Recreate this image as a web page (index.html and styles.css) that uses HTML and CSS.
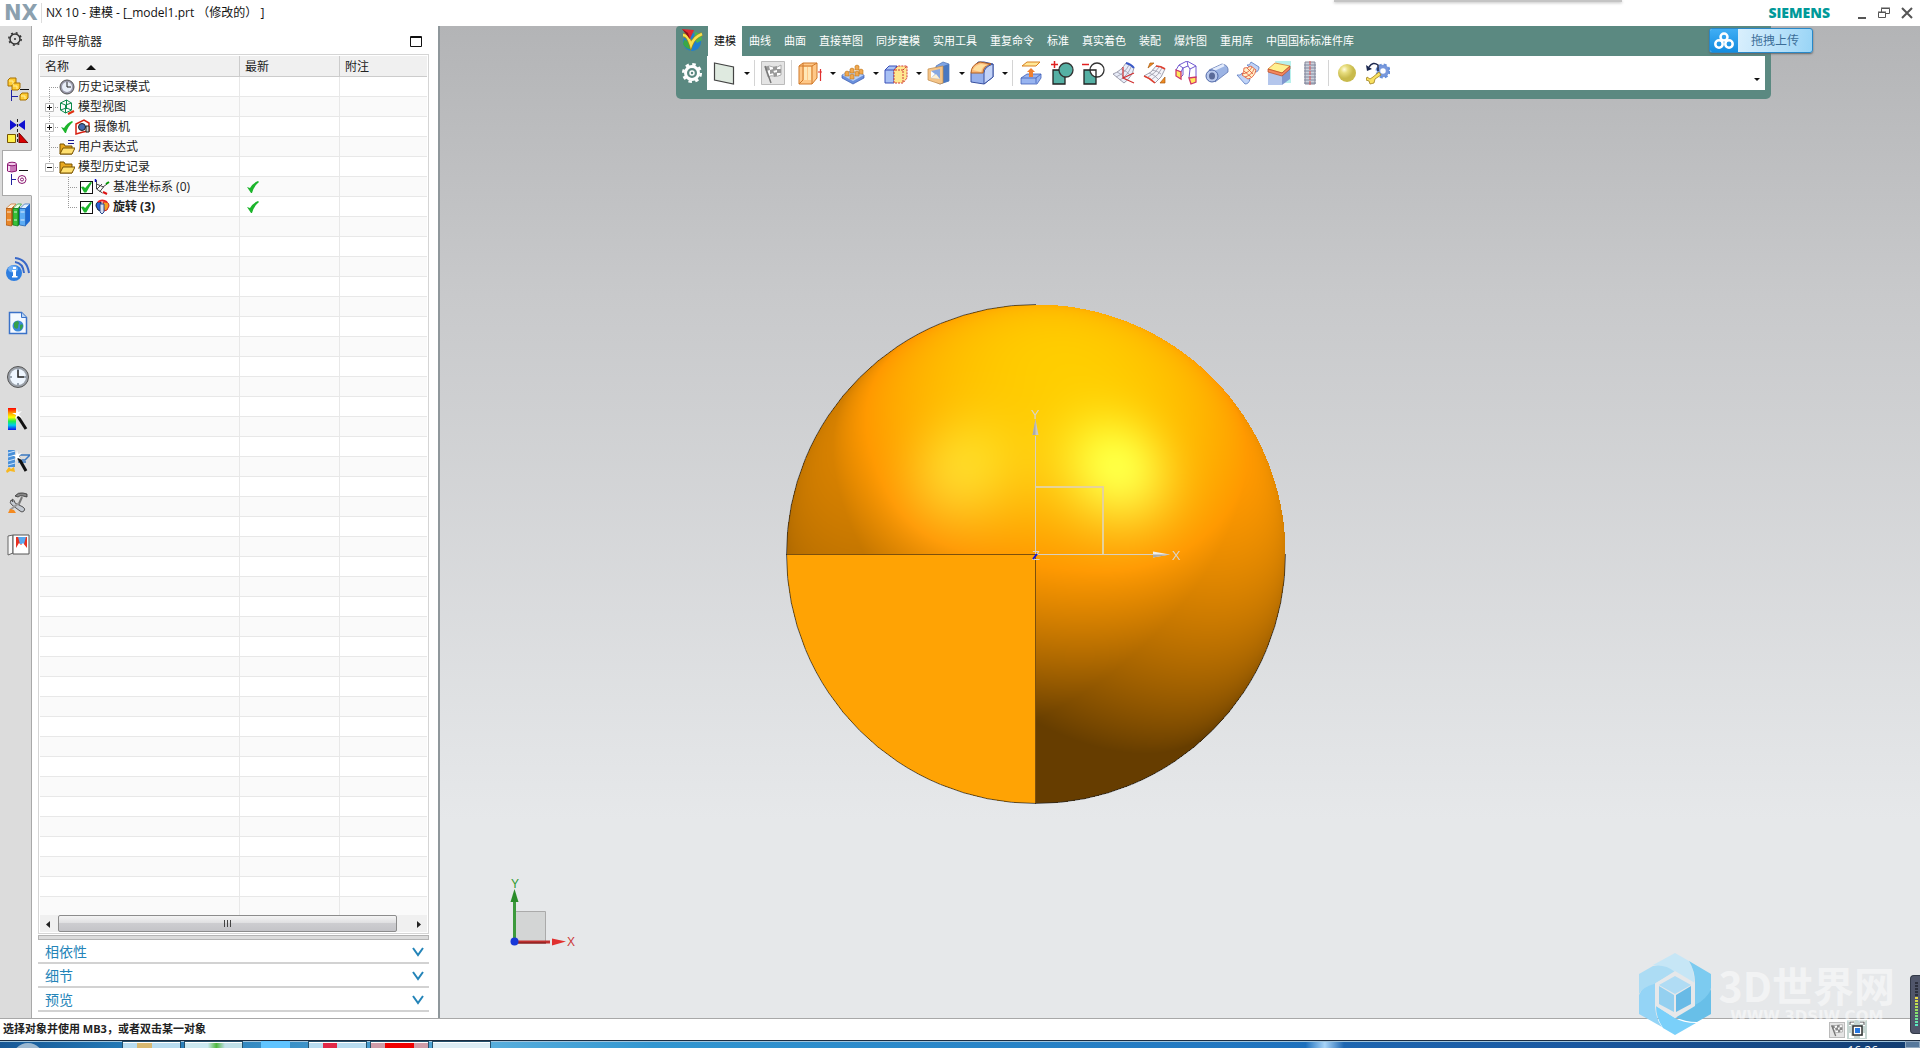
FILE: index.html
```html
<!DOCTYPE html>
<html lang="zh-CN">
<head>
  <meta charset="utf-8">
  <title>NX 10 - 建模</title>
  <link rel="stylesheet" href="styles.css">
</head>
<body>
  <header class="titlebar">
    <span class="nx-logo">NX</span>
    <h1 class="title">NX 10 - 建模 - [_model1.prt （修改的） ]</h1>
    <div class="top-shadow"></div>
    <span class="siemens">SIEMENS</span>
    <div class="window-buttons">
      <button aria-label="最小化"><svg width="12" height="14" viewBox="0 0 12 14"><path d="M2 11h8v2H2z" fill="#555"/></svg></button>
      <button aria-label="还原"><svg width="14" height="14" viewBox="0 0 14 14" fill="none" stroke="#555"><path d="M4.500 6V2.500h8v5H9M4 2h9"/><path d="M1.500 6.500h7v5h-7zM1 6h8"/></svg></button>
      <button aria-label="关闭"><svg width="14" height="14" viewBox="0 0 14 14" stroke="#555" stroke-width="2"><path d="M2 2l10 10M12 2L2 12"/></svg></button>
    </div>
  </header>

  <main class="main">
    <nav class="sidebar">
      <button class="side-gear" aria-label="设置"><svg width="16" height="16" viewBox="0 0 16 16" fill="none" stroke="#333"><circle cx="8" cy="8" r="5" stroke-width="1.500"/><circle cx="8" cy="8" r="6.200" stroke-width="1.500" stroke-dasharray="2 2.870"/><circle cx="8" cy="8" r="1" fill="#333" stroke="none"/></svg></button>
      <button class="side-item" aria-label="装配导航器"><svg width="24" height="24" viewBox="0 0 24 24"><g fill="#fc3" stroke="#a87000"><path d="M2 3l2-2h6v6l-2 2H2z"/><path d="M6 8l2-2h6v5l-2 2H6zM14 18l2-2h6v5l-2 2h-6z"/></g><path d="M3 4h4v4M7 9h4v3M15 19h4v3" fill="none" stroke="#fff2a0"/><path d="M5.500 13v11M5 19.500h7" stroke="#2222a0"/><path d="M14 12.500h9" stroke="#111"/></svg></button>
      <button class="side-item" aria-label="约束导航器"><svg width="24" height="24" viewBox="0 0 24 24"><path d="M4 1l7 5-7 5zM19 1l-7 5 7 5z" fill="#1010d0"/><path d="M1.500 15.500h8v8h-8z" fill="#fff04a" stroke="#775500"/><path d="M13 14l9 10h-9z" fill="#d80000" stroke="#600"/><path d="M11.500 0v24" stroke="#222" stroke-dasharray="3 2"/></svg></button>
      <button class="side-item active" aria-label="部件导航器"><svg width="24" height="24" viewBox="0 0 24 24"><path d="M1.500 3v7q4 2 9 0V3" fill="#c878b8" stroke="#8a1870"/><ellipse cx="6" cy="3" rx="4.500" ry="1.800" fill="#f2c8ea" stroke="#8a1870"/><path d="M3 5v5" stroke="#f5d8f0" stroke-width="2"/><path d="M5.500 13v11M5 18.500h5" stroke="#2222a0"/><path d="M13 9.500h9" stroke="#111"/><g fill="none" stroke="#8a1870"><circle cx="16" cy="18.500" r="4"/><circle cx="16" cy="18.500" r="1.500"/></g></svg></button>
      <button class="side-item" aria-label="重用库"><svg width="24" height="24" viewBox="0 0 24 24"><path d="M0 5.500L5 1h5L5.500 5.500z" fill="#fff0dc" stroke="#c87020" stroke-width=".7"/><path d="M0 5.500h5.500V23L0 22z" fill="#e8872a" stroke="#a85010" stroke-width=".7"/><path d="M5.500 5.500L8 3v18l-2.500 2z" fill="#b85a10"/><path d="M7 5.500L11.500 1h4L12 5.500z" fill="#e8ffe4" stroke="#1c9a2c" stroke-width=".7"/><path d="M7 5.500h5V23l-5-1z" fill="#38c038" stroke="#0c7a1c" stroke-width=".7"/><path d="M12 5.500L14 3v18l-2 2z" fill="#128020"/><path d="M14 5.500L18.500 1H24l-4.500 4.500z" fill="#e0f0ff" stroke="#2868c0" stroke-width=".7"/><path d="M13.500 5.500h6V23l-6-1z" fill="#5cacf4" stroke="#1558a8" stroke-width=".7"/><path d="M19.500 5.500L24 1v17l-4.500 5z" fill="#1c68d0"/><path d="M1 9h4M1 17h4M8 9h3M8 17h3M14.500 9h4M14.500 17h4" stroke="#fff" opacity=".8"/></svg></button>
      <button class="side-item gap" aria-label="资讯"><svg width="24" height="24" viewBox="0 0 24 24"><circle cx="8" cy="16" r="8" fill="#2e7ee0"/><ellipse cx="7" cy="12" rx="5" ry="3.500" fill="#8cc4ff" opacity=".7"/><path d="M7 10h3v2H7zM6 13h4v6h1.500v1.500H6V19h1v-4.500H6z" fill="#fff"/><g fill="none" stroke="#3868c8" stroke-width="2"><path d="M9 5q8 1 9 11"/><path d="M9 1q12 1 14 15"/></g></svg></button>
      <button class="side-item gap" aria-label="浏览器"><svg width="24" height="24" viewBox="0 0 24 24"><path d="M3.500 1.500h12l5 5v16h-17z" fill="#f4f9ff" stroke="#3a72c8" stroke-width="1.500"/><path d="M15.500 1.500v5h5" fill="#bcd6f4" stroke="#3a72c8"/><circle cx="12" cy="15" r="5.500" fill="#3c88d8"/><path d="M8 12q4-4 5 0-1 2-1 5-2 2-4-1zM14 14q3-2 3 1-1 3-3 4z" fill="#34a04a"/></svg></button>
      <button class="side-item gap" aria-label="历史记录"><svg width="24" height="24" viewBox="0 0 24 24"><circle cx="12" cy="12" r="10.500" fill="#9aa0a8" stroke="#555"/><circle cx="12" cy="12" r="8" fill="#eef6ff"/><path d="M12 5v7h6" fill="none" stroke="#222" stroke-width="1.500"/><path d="M12 4v2M12 18v2M4 12h2M18 12h2" stroke="#456"/></svg></button>
      <button class="side-item" aria-label="系统材料"><svg width="24" height="24" viewBox="0 0 24 24"><defs><linearGradient id="rainbow" x2="0" y2="1"><stop stop-color="#f00"/><stop offset=".25" stop-color="#fa0"/><stop offset=".42" stop-color="#ff0"/><stop offset=".6" stop-color="#2e4"/><stop offset=".78" stop-color="#0ce"/><stop offset="1" stop-color="#11e"/></linearGradient></defs><path d="M2 1h8v22H2z" fill="url(#rainbow)"/><path d="M11 8l9 14" stroke="#111" stroke-width="3"/><path d="M11 1l1 4 4-1-3 3 3 4-4-2-3 3 1-4-4-2h4z" fill="#fff"/></svg></button>
      <button class="side-item" aria-label="加工向导"><svg width="24" height="24" viewBox="0 0 24 24"><path d="M2 1h7v17H2z" fill="#4a90d8"/><path d="M2 4l7-2M2 8l7-2M2 12l7-2M2 16l7-2" stroke="#cfe6ff"/><path d="M12 6h12l-5 5h-6M12 13h8" fill="none" stroke="#3a78c0" stroke-width="1.500"/><path d="M0 22l3-4 2 2 3-2 1 5-5-1-3 2z" fill="#f8b820"/><path d="M11 6l9 16" stroke="#111" stroke-width="3"/><path d="M11 1l1 4 4-1-3 3 3 4-4-2-3 3 1-4-4-2h4z" fill="#fff"/></svg></button>
      <button class="side-item" aria-label="工具"><svg width="24" height="24" viewBox="0 0 24 24"><path d="M9 5q3-4 8-3l4 1v3l-4-1q-3-1-5 1z" fill="#888" stroke="#333" stroke-width=".8"/><path d="M16 6l-4 9" stroke="#777" stroke-width="2"/><path d="M5 9q-2 3 1 5l8 6q2 2 4 0t-1-4l-8-4q0-3-3-4l1 3z" fill="#c4cad2" stroke="#555"/><path d="M4 19l9-7" stroke="#999" stroke-width="2"/><path d="M2 22l2-4 4 1 2 3z" fill="#f48a20"/></svg></button>
      <button class="side-item" aria-label="角色"><svg width="24" height="24" viewBox="0 0 24 24"><path d="M2 3l5-1v18l-5 2z" fill="#f8f8f8" stroke="#666"/><path d="M7 2h16v19H7z" fill="#fff" stroke="#555"/><path d="M10 4h11v11H10z" fill="#e83020"/><path d="M12 4h8l-2 7h-4z" fill="#58a8f0"/><path d="M10 15l3-5 2 2 2-2 4 5z" fill="#fff"/></svg></button>
    </nav>

    <section class="navigator">
      <div class="nav-head">
        <h2 class="nav-title">部件导航器</h2>
        <button aria-label="最大化"><svg width="12" height="12" viewBox="0 0 12 12"><path d="M.5.5h11v10H.5zM0 1.500h12" fill="none" stroke="#111"/></svg></button>
      </div>
      <div class="tree-frame">
        <div class="tree-grid">
          <table class="tree">
            <thead>
              <tr><th class="col-name">名称 <span class="sort"></span></th><th class="col-new">最新</th><th>附注</th></tr>
            </thead>
            <tbody>
              <tr><td><div class="node"><svg class="twig" viewBox="0 0 19 20"><path d="M9.500 10v10M9 10.500h10"/></svg><svg class="ico" viewBox="0 0 16 16"><circle cx="8" cy="8" r="7" fill="#99a" stroke="#555"/><circle cx="8" cy="8" r="5" fill="#e8eef8"/><path d="M8 3v5h4" fill="none" stroke="#222"/></svg><span>历史记录模式</span></div></td><td></td><td></td></tr>
              <tr><td><div class="node"><svg class="twig" viewBox="0 0 19 20"><path d="M9.500 0v20M9 10.500h10"/><path class="box" d="M5.500 6.500h8v8h-8z"/><path class="sign" d="M7 10.500h5M9.500 8v5"/></svg><svg class="ico" viewBox="0 0 16 16"><path d="M1.500 4l6-3 5 3v7l-6 3-5-3zM1.500 4l5 2 6-2M6.500 6v8M7.500 1v9M1.500 11l6-2 5 2" fill="none" stroke="#0a8a4a"/><path d="M9 15l6-3" stroke="#e03010" stroke-width="2"/></svg><span>模型视图</span></div></td><td></td><td></td></tr>
              <tr><td><div class="node"><svg class="twig" viewBox="0 0 19 20"><path d="M9.500 0v20M9 10.500h10"/><path class="box" d="M5.500 6.500h8v8h-8z"/><path class="sign" d="M7 10.500h5M9.500 8v5"/></svg><svg class="ico" viewBox="0 0 16 16"><path d="M2 8l3 1q3-5 8-7l1 1q-5 4-7 11H6Q4 11 2 8z" fill="#1db52c"/></svg><svg class="ico" viewBox="0 0 16 16"><path d="M1 5l8-4 5 3v8l-6 1-7 2z" fill="#fff" stroke="#d82010" stroke-width="1.500"/><circle cx="7" cy="8" r="3.500" fill="#456ab0" stroke="#222"/><path d="M11 7h3v6h-3z" fill="#d0d0d0" stroke="#222"/></svg><span>摄像机</span></div></td><td></td><td></td></tr>
              <tr><td><div class="node"><svg class="twig" viewBox="0 0 19 20"><path d="M9.500 0v20M9 10.500h10"/></svg><svg class="ico" viewBox="0 0 16 16"><path d="M1 5h4l1 2h7v8H1z" fill="#e8a820" stroke="#7a5400"/><path d="M4 9h12l-3 6H1z" fill="#ffe070" stroke="#7a5400"/><path d="M9 1.500h6M9 4.500h6" stroke="#1a1a90"/></svg><span>用户表达式</span></div></td><td></td><td></td></tr>
              <tr><td><div class="node"><svg class="twig" viewBox="0 0 19 20"><path d="M9.500 0v10M9 10.500h10"/><path class="box" d="M5.500 6.500h8v8h-8z"/><path class="sign" d="M7 10.500h5"/></svg><svg class="ico" viewBox="0 0 16 16"><path d="M1 3h4l1 2h7v9H1z" fill="#e8a820" stroke="#7a5400"/><path d="M4 8h12l-3 6H1z" fill="#ffe070" stroke="#7a5400"/></svg><span>模型历史记录</span></div></td><td></td><td></td></tr>
              <tr><td><div class="node"><svg class="twig deep" viewBox="0 0 39 20"><path d="M28.500 0v20M28 10.500h10"/></svg><input type="checkbox" class="check" id="csys" checked><svg class="ico" viewBox="0 0 16 16"><path d="M2.500 1v9l6 4M2.500 5l7 3-4 5M9 8l4-3M3 10l5-5" fill="none" stroke="#444"/><path d="M1.500 0v3" stroke="#11c" stroke-width="1.500"/><path d="M12 5l3-2" stroke="#090" stroke-width="2"/><path d="M9 13l4 2" stroke="#d11" stroke-width="2"/></svg><label for="csys">基准坐标系 (0)</label></div></td><td><svg class="ico tick" viewBox="0 0 16 16"><path d="M2 8l3 1q3-5 8-7l1 1q-5 4-7 11H6Q4 11 2 8z" fill="#1db52c"/></svg></td><td></td></tr>
              <tr class="bold"><td><div class="node"><svg class="twig deep" viewBox="0 0 39 20"><path d="M28.500 0v10M28 10.500h10"/></svg><input type="checkbox" class="check" id="revolve" checked><svg class="ico" viewBox="0 0 16 16"><path d="M7 3Q2 2 2 7l2 4 3 1z" fill="#2a62d8" stroke="#124"/><path d="M9 3q6-1 6 4l-2 4-3 1z" fill="#f8a020" stroke="#c22"/><path d="M6 5h4v8l-2 2-2-2z" fill="#d8e0f0" stroke="#2a4a90"/><path d="M4 3q4-3 9 0" fill="none" stroke="#e22" stroke-width="2"/></svg><label for="revolve">旋转 (3)</label></div></td><td><svg class="ico tick" viewBox="0 0 16 16"><path d="M2 8l3 1q3-5 8-7l1 1q-5 4-7 11H6Q4 11 2 8z" fill="#1db52c"/></svg></td><td></td></tr>
            </tbody>
          </table>
        </div>
        <div class="hscroll">
          <button aria-label="向左滚动"><svg width="18" height="16" viewBox="0 0 18 16"><path d="M10 5v7L6 8.500z" fill="#222"/></svg></button>
          <div class="thumb"><i></i><i></i><i></i></div>
          <button aria-label="向右滚动"><svg width="18" height="16" viewBox="0 0 18 16"><path d="M8 5v7l4-3.500z" fill="#222"/></svg></button>
        </div>
      </div>
      <div class="splitter"></div>
      <button class="section">相依性 <svg width="12" height="10" viewBox="0 0 12 10"><path d="M1 1l5 7 5-7" fill="none" stroke="#2484b8" stroke-width="2"/></svg></button>
      <button class="section">细节 <svg width="12" height="10" viewBox="0 0 12 10"><path d="M1 1l5 7 5-7" fill="none" stroke="#2484b8" stroke-width="2"/></svg></button>
      <button class="section">预览 <svg width="12" height="10" viewBox="0 0 12 10"><path d="M1 1l5 7 5-7" fill="none" stroke="#2484b8" stroke-width="2"/></svg></button>
    </section>

    <section class="viewport">
      <div class="model">
        <canvas id="sphere" width="500" height="500"></canvas>
        <svg class="model-lines" viewBox="0 0 500 500">
          <path d="M0 250.500h250M249.500 250v250" fill="none" stroke="#7d500c"/>
          <path d="M250 .5A249.500 249.500 0 1 0 499.500 250" fill="none" stroke="#222" stroke-opacity=".7"/>
          <path d="M249.500 250V132M250 250.500h118" fill="none" stroke="#d8d0c0"/>
          <path d="M250 183h67v67" fill="none" stroke="#e6d29a" stroke-width="2"/>
          <path d="M249.500 115l3 16h-6z" fill="#c8c8c8"/><path d="M249.500 115v16h-3z" fill="#aaa"/>
          <path d="M384 250.500l-17-3v6z" fill="#eee"/><path d="M384 250.500h-17v3z" fill="#aaa"/>
          <text x="249" y="115" class="axis">Y</text>
          <text x="390" y="256" class="axis">X</text>
          <text x="250" y="256" class="axis">Z</text>
          <path d="M247 255l4-5" stroke="#11d" stroke-width="2"/>
        </svg>
      </div>

      <svg class="triad" viewBox="0 0 80 80">
        <path d="M17.500 32.500h30v30h-30z" fill="#d3d5d5" stroke="#aaa"/>
        <path d="M16.500 60V22" stroke="#3c9a3c" stroke-width="3"/><path d="M16.500 10l4 13h-8z" fill="#2a8c2a"/>
        <path d="M20 63h32" stroke="#c03030" stroke-width="3"/><path d="M20 64h28" stroke="#701818"/><path d="M68 62.500l-14-3v7z" fill="#e03030"/>
        <circle cx="16.500" cy="62.500" r="4" fill="#1838d8"/>
        <text x="17" y="9" fill="#2f9a2f">Y</text><text x="73" y="67" fill="#cc3a3a">X</text>
      </svg>

      <div class="toolbar">
        <svg class="app-logo" viewBox="0 0 24 24"><circle cx="12" cy="14" r="9" fill="#1f7fd0"/><path d="M4 12q5 0 8 9-6 1-9-5z" fill="#3aa848"/><path d="M15 4q7 1 7 8l-5 3-3-5z" fill="#49b455"/><path d="M3 7q5 0 8 10 3-8 11-11" fill="none" stroke="#a08a18" stroke-width="4"/><path d="M3 7q5 0 8 10 3-8 11-11" fill="none" stroke="#f6e050" stroke-width="2.500"/><path d="M2 1l12 1-4 9z" fill="#e02830"/><path d="M2 1l6 4 2 6z" fill="#8c1018"/></svg>
        <div class="tabs">
          <button class="tab current">建模</button>
          <button class="tab">曲线</button>
          <button class="tab">曲面</button>
          <button class="tab">直接草图</button>
          <button class="tab">同步建模</button>
          <button class="tab">实用工具</button>
          <button class="tab">重复命令</button>
          <button class="tab">标准</button>
          <button class="tab">真实着色</button>
          <button class="tab">装配</button>
          <button class="tab">爆炸图</button>
          <button class="tab">重用库</button>
          <button class="tab">中国国标标准件库</button>
        </div>
        <button class="gear" aria-label="工具栏选项"><svg width="22" height="22" viewBox="0 0 22 22" fill="none" stroke="#fff"><circle cx="11" cy="11" r="6.500" stroke-width="3"/><circle cx="11" cy="11" r="8.800" stroke-width="2.500" stroke-dasharray="3.500 3.410"/><circle cx="11" cy="11" r="2" stroke-width="1.500"/></svg></button>
        <div class="tools">
          <button class="tool drop" aria-label="基准平面"><svg viewBox="0 0 24 24"><path d="M2.500 2l19 4v17l-19-4z" fill="#dfeae0" stroke="#444" stroke-width="1.200"/></svg></button>
          <span class="sep"></span>
          <button class="tool" aria-label="完成草图"><svg viewBox="0 0 24 24"><path d="M.5.5h23v23H.5z" fill="#e4e4e4" stroke="#bbb"/><path d="M4 6q5-2 8 0t8-2v10q-4 2-7 1t-6 1z" fill="#fff" stroke="#aaa"/><path d="M4 6l4-1 1 4-4 1zM12 6l4-1v4l-4 1zM9 9l3-1 1 4-4 1zM16 8h4v4h-4zM12 12l4-1v4l-3 1z" fill="#999"/><path d="M4 5l6 17" stroke="#777" stroke-width="1.500"/></svg></button>
          <span class="sep"></span>
          <button class="tool drop" aria-label="拉伸"><svg viewBox="0 0 24 24"><path d="M1 5l4-3h14v15l-5 6H1z" fill="#ffc888" stroke="#d07828"/><path d="M1 5h4V2M5 5v14l-4 4M14 23V5l5-3M5 5h9" fill="none" stroke="#d07828"/><path d="M6 6h3v13H6zM10 6h3v13h-3z" fill="#ffe8b8"/><path d="M22.500 8v12M20 11h4" stroke="#e03030" stroke-width="1.200"/></svg></button>
          <button class="tool drop" aria-label="阵列特征"><svg viewBox="0 0 24 24"><path d="M1 14l9-4 13 4v3l-11 6L1 17z" fill="#6a90dc" stroke="#3a5ab0" stroke-width=".7"/><path d="M1 14l9-4 13 4-11 6z" fill="#b8d0f8"/><g fill="#f0a850" stroke="#c07820" stroke-width=".6"><path d="M4 11q2-2 4 0v4H4zM9 8q2-2 4 0v4H9zM9 14q2-2 4 0v4H9zM14 11q2-2 4 0v4h-4zM14 5q2-2 4 0v4h-4zM18 9q2-2 4 0v4h-4z"/></g></svg></button>
          <button class="tool drop" aria-label="镜像特征"><svg viewBox="0 0 24 24"><path d="M1 9l4-4h8v13l-3 4H1z" fill="#a8c0f4" stroke="#3a50b8"/><path d="M1 9h9v12M10 9l3-4" fill="none" stroke="#3a50b8"/><path d="M10 9l4-4h9v12l-4 5h-9z" fill="#ffe890" stroke="#d03838" stroke-dasharray="2 1"/><path d="M19 21V9h-9M19 9l4-4" fill="none" stroke="#d03838" stroke-dasharray="2 1"/></svg></button>
          <button class="tool drop" aria-label="抽壳"><svg viewBox="0 0 24 24"><path d="M9 5l7-4 6 2v17l-9 3-4-2z" fill="#7fa4e4" stroke="#4a70b0" stroke-width=".7"/><path d="M16 5l6-2v17l-6 2z" fill="#4a78c0"/><path d="M1 8l15-3v17l-3 1L1 19z" fill="#f4c488" stroke="#c08a48" stroke-width=".7"/><path d="M4 10l9-2v10l-9-1z" fill="#88a8e0"/><path d="M4 17l5-4 4 5z" fill="#fff0d0"/><path d="M4 10l4 3-4 4z" fill="#fff"/></svg></button>
          <button class="tool drop" aria-label="边倒圆"><svg viewBox="0 0 24 24"><path d="M1 12v9l13 2 9-7V3l-9-2H8z" fill="#96b0ec" stroke="#3850a0"/><path d="M14 23V12q0-6 9-9v13z" fill="#c4d4f8" stroke="#3850a0"/><path d="M1 12q0-8 9-11l11 2q-8 2-8 9z" fill="#fcb878" stroke="#b06020"/><path d="M3 9q2-5 8-6l7 1q-6 1-7 7z" fill="#ffe0a0"/></svg></button>
          <span class="sep"></span>
          <button class="tool" aria-label="偏置面"><svg viewBox="0 0 24 24"><path d="M2 17l6-4h14v4l-4 6H2z" fill="#98b4f0" stroke="#4060b8" stroke-width=".8"/><path d="M2 17h15l5-4M17 17v5" fill="none" stroke="#4060b8" stroke-width=".8"/><path d="M3 5l5-4h13l-4 4z" fill="#ffe898" stroke="#d88020"/><path d="M12 7l4 4h-2v5h-4v-5H8z" fill="#f08030"/></svg></button>
          <button class="tool" aria-label="合并"><svg viewBox="0 0 24 24"><path d="M1 3.500h7M4.500 0v7" stroke="#e02020" stroke-width="1.500"/><path d="M3 9h12v14H3z" fill="#55b0a4"/><circle cx="16" cy="9" r="7" fill="#55b0a4" stroke="#333" stroke-width="1.300"/><path d="M9 9H3v14h12v-7" fill="none" stroke="#222" stroke-width="1.300"/></svg></button>
          <button class="tool" aria-label="减去"><svg viewBox="0 0 24 24"><path d="M1 3.500h7" stroke="#e02020" stroke-width="1.500"/><path d="M3 9h12v14H3z" fill="#55b0a4"/><circle cx="16" cy="9" r="7" fill="#fff" stroke="#333" stroke-width="1.300"/><path d="M3 9h12v14H3z" fill="none" stroke="#222" stroke-width="1.300"/></svg></button>
          <button class="tool" aria-label="通过曲线组"><svg viewBox="0 0 24 24"><path d="M1 13q8-3 13-11l8 5q-2 9-10 15-5-4-11-9z" fill="#e8ecf8" stroke="#889" stroke-width=".8"/><path d="M4 16q9-4 13-12M8 19q8-5 11-13M5 11q6 2 9 8M9 8q6 2 9 6" fill="none" stroke="#99a" stroke-width=".8"/><path d="M11 6v11l11-5M11 17l11 5" fill="none" stroke="#d03030" stroke-width="1.200"/><path d="M14 2q5 1 8 5" stroke="#3858c8" stroke-width="2" fill="none"/></svg></button>
          <button class="tool" aria-label="扫掠曲面"><svg viewBox="0 0 24 24"><path d="M1 15q8-3 12-10 5 0 9 3-3 9-10 14-5-5-11-7z" fill="#f4f4fa" stroke="#889" stroke-width=".8"/><path d="M5 16q8-4 11-10M8 19q8-5 11-12M6 12q6 2 9 6M9 9q6 1 9 4" fill="none" stroke="#99a" stroke-width=".8"/><path d="M13 5q5 0 9 3M1 15q6 2 11 7" fill="none" stroke="#e04030" stroke-width="1.700"/><path d="M5 7l2-5h4zM17 22l5-6v6z" fill="#f08a20" stroke="#a85a10" stroke-width=".7"/></svg></button>
          <button class="tool" aria-label="管道框架"><svg viewBox="0 0 24 24"><g fill="none" stroke="#7058d0"><path d="M2 9l3-5 8-4 9 5v12M2 9l5 2 2-4 5-2 2 3-1 9M5 4l4 3M13 0l1 5M22 5l-6 3M6 17l3-3V7"/></g><path d="M2 9l5 2v7l-5-3zM15 17l7-1v5l-5 2z" fill="#ffe85a" stroke="#d03868" stroke-width="1.300"/></svg></button>
          <button class="tool" aria-label="管"><svg viewBox="0 0 24 24"><path d="M4 9L17 3q7 1 6 8L10 21z" fill="#9cb4e4" stroke="#5068a8" stroke-width=".7"/><path d="M8 9l11-5" stroke="#e4ecfc" stroke-width="3"/><ellipse cx="7" cy="15" rx="6" ry="6" fill="#b8c8ec" stroke="#5068a8"/><ellipse cx="7" cy="15" rx="3" ry="3.500" fill="#5a6a98"/></svg></button>
          <button class="tool" aria-label="修剪片体"><svg viewBox="0 0 24 24"><path d="M11 4q3 1 4-3l8 5q0 5-4 5zM1 14q4 1 5-2l8 6q-1 5-5 5z" fill="#c0d4f8" stroke="#5878c0" stroke-width=".8"/><path d="M8 7q4 0 7-2l5 4q-2 8-8 9l-6-4q2-3 2-7z" fill="#fff0c8" stroke="#e05030" stroke-width=".8"/><path d="M8 10l7 6M11 7l6 6M6 13q7-1 10-7M9 16q7-2 9-8" fill="none" stroke="#e05030" stroke-width=".8"/></svg></button>
          <button class="tool" aria-label="替换面"><svg viewBox="0 0 24 24"><path d="M8 0h16v22h-8z" fill="#b8f0ec"/><path d="M1 10l14 4v10H1z" fill="#b4c6ec"/><path d="M15 14l8-7v11l-8 6z" fill="#8098d0"/><path d="M1 8l7-6 15 3-8 7z" fill="#fff090" stroke="#d88030" stroke-width=".8"/><path d="M1 8l14 4 8-7v3l-8 7-14-4z" fill="#f48860" stroke="#b84820" stroke-width=".7"/></svg></button>
          <button class="tool" aria-label="螺纹"><svg viewBox="0 0 24 24"><path d="M7 1h10v22H7z" fill="#ccd2dc" stroke="#889"/><path d="M6 4h12M6 7h12M6 10h12M6 13h12M6 16h12M6 19h12M6 22h12" stroke="#8088a0"/><path d="M12 0v24" stroke="#e05050" stroke-dasharray="4 1"/></svg></button>
          <span class="sep"></span>
          <button class="tool" aria-label="球"><svg viewBox="0 0 24 24"><defs><radialGradient id="ball" cx=".35" cy=".3"><stop stop-color="#fffce0"/><stop offset=".4" stop-color="#e8de80"/><stop offset="1" stop-color="#c8ba4c"/></radialGradient></defs><circle cx="12" cy="12" r="9" fill="url(#ball)"/></svg></button>
          <button class="tool" aria-label="编辑特征参数"><svg viewBox="0 0 24 24"><circle cx="17" cy="10" r="4.500" fill="none" stroke="#7898dc" stroke-width="3.500"/><circle cx="17" cy="10" r="6.500" fill="none" stroke="#6890d8" stroke-width="2" stroke-dasharray="3 2.100"/><path d="M1 16l3 2 3-2 6-5 2 3-6 4-1 4-4 1-1-3-3-1z" fill="#f8e060" stroke="#a08020" stroke-width=".8"/><path d="M3 6q4-6 9-2v6" fill="none" stroke="#1c2850" stroke-width="1.500"/><path d="M0 4l6 4-5 2z" fill="#1c2850"/></svg></button>
          <button class="overflow" aria-label="更多"></button>
        </div>
      </div>

      <button class="upload">
        <span class="upload-icon"><svg width="20" height="18" viewBox="0 0 20 18" fill="none" stroke="#fff" stroke-width="2.500"><circle cx="10" cy="5" r="3.500"/><circle cx="5" cy="12" r="3.700"/><circle cx="15" cy="12" r="3.700"/></svg></span>
        <span class="upload-text">拖拽上传</span>
      </button>
    </section>
  </main>

  <footer class="statusbar">
    <span class="hint">选择对象并使用 MB3，或者双击某一对象</span>
    <button class="status-flag" aria-label="完成"><svg viewBox="0 0 24 24" width="16" height="16"><path d="M.5.5h23v23H.5z" fill="#e4e4e4" stroke="#bbb" stroke-width="2"/><path d="M4 6l16-2v11l-10 1z" fill="#fff" stroke="#999"/><path d="M4 6l4-1 1 4-4 1zM12 5l4-1v4l-4 1zM9 9l4-1 1 4-4 1zM16 8h4v4h-4zM13 12l4-1v4l-3 1z" fill="#888"/><path d="M4 5l6 16" stroke="#777" stroke-width="2"/></svg></button>
    <button class="status-screen" aria-label="全屏"><svg width="20" height="19" viewBox="0 0 20 19"><path d="M3 6V3h4M13 3h4v3M17 13v4h-4M7 17H3v-4" fill="none" stroke="#fff" stroke-width="2"/><path d="M3 5V2h4M13 2h4v3" fill="none" stroke="#555"/><path d="M6 6h9v9H6z" fill="#fff" stroke="#333" stroke-width="1.500"/><path d="M8 8h5v5H8z" fill="#2478e0"/></svg></button>
  </footer>

  <div class="taskbar">
    <span class="orb"></span>
    <span class="task t-folder"></span>
    <span class="task t-green"></span>
    <span class="task t-blue"></span>
    <span class="task t-pink"></span>
    <span class="task t-red"></span>
    <span class="task t-nx"></span>
    <span class="clock">16:26</span>
    <span class="show-desktop"></span>
  </div>

  <div class="watermark">
    <svg width="72" height="82" viewBox="0 0 72 82">
      <path d="M36 0l14 8q6 10 5 24L36 19 20 13 14 12z" fill="#c6e6f6"/>
      <path d="M50 8l22 13v14q-3 15-16 25V30q0-12-6-22z" fill="#7ccbf0"/>
      <path d="M72 36v25L58 69q-12 0-22-5l20-12q12-6 16-16z" fill="#68bfe8"/>
      <path d="M57 70L36 82 24 75q-7-10-7-22l19 12q8 5 21 5z" fill="#7ad0fa"/>
      <path d="M23 74L0 61V42q5-12 16-18v30q1 12 7 20z" fill="#94d4f6"/>
      <path d="M0 41V21l14-8q12-2 22 6L15 31Q4 34 0 41z" fill="#acdcf4"/>
      <path d="M36 18l20 12v23L36 65 17 53V30z" fill="#e6e8ea"/>
      <path d="M36 23l16 9-16 9-16-9z" fill="#b0dcf4"/><path d="M20 33l15 9v17l-15-8z" fill="#94d0f0"/><path d="M52 33l-15 9v17l15-8z" fill="#68bae6"/>
    </svg>
    <div class="watermark-text"><strong>3D世界网</strong><span>WWW.3DSJW.COM</span></div>
  </div>

  <div class="meter"><i></i></div>

  <script src="model.js"></script>
</body>
</html>
```

FILE: styles.css
```css
* {
  box-sizing: border-box;
}

body {
  margin: 0;
  height: 100vh;
  display: flex;
  flex-direction: column;
  overflow: hidden;
  position: relative;
  background: #fff;
  color: #222;
  font: 12px/16px "Open Sans", "Noto Sans CJK SC", sans-serif;
}

button {
  border: 0;
  padding: 0;
  background: none;
  font: inherit;
  color: inherit;
  display: flex;
  align-items: center;
  justify-content: center;
}

h1, h2 {
  margin: 0;
  font-size: 12px;
  font-weight: normal;
}

/* title bar */
.titlebar {
  height: 26px;
  display: flex;
  align-items: center;
  padding: 0 6px 0 4px;
  position: relative;
}

.nx-logo {
  width: 38px;
  padding-right: 4px;
  border-right: 1px solid #ddd;
  color: #8ba0ae;
  font: bold 21px/20px "DejaVu Sans", sans-serif;
}

.title {
  margin-left: 4px;
  color: #111;
  text-spacing-trim: space-all;
}

.top-shadow {
  position: absolute;
  top: 0;
  left: 69.5%;
  width: 15%;
  height: 2px;
  background: #c4c4c4;
  box-shadow: 0 1px 3px #bbb;
}

.siemens {
  margin-left: auto;
  color: #009999;
  font-weight: 800;
  font-size: 14px;
}

.window-buttons {
  display: flex;
  gap: 9px;
  margin-left: 26px;
}

/* main area */
.main {
  flex: 1;
  min-height: 0;
  display: flex;
}

.sidebar {
  width: 32px;
  background: #dcdcdc;
  border-right: 1px solid #a9a9a9;
}

.sidebar button {
  width: 31px;
}

.side-gear {
  height: 26px;
  margin-bottom: 16px;
  padding-right: 2px;
}

.sidebar .side-item {
  height: 42px;
  padding-left: 4px;
}

.sidebar .gap {
  margin-top: 12px;
}

.sidebar .active {
  width: 30px;
  height: 46px;
  margin: -2px 0 -2px 2px;
  padding-left: 2px;
  border: 1px solid #a9a9a9;
  border-right-color: #fff;
  background: #fff;
}

.navigator {
  width: 408px;
  padding: 0 9px 6px 6px;
  border-right: 2px solid #8f979b;
  display: flex;
  flex-direction: column;
  background: #fff;
}

.nav-head {
  height: 28px;
  display: flex;
  align-items: center;
  justify-content: space-between;
  padding: 3px 7px 0 4px;
}

.tree-frame {
  flex: 1;
  min-height: 0;
  display: flex;
  flex-direction: column;
  border: 1px solid #d5d5d5;
  padding: 1px;
}

/* row stripes and column rules run on below the last row */
.tree-grid {
  flex: 1;
  min-height: 0;
  background:
    linear-gradient(#e8e8e8, #e8e8e8) 199px 0 / 1px 100% no-repeat,
    linear-gradient(#e8e8e8, #e8e8e8) 299px 0 / 1px 100% no-repeat,
    repeating-linear-gradient(#fff 0 19px, #e8e8e8 19px 20px, #fafafa 20px 39px, #e8e8e8 39px 40px) 0 21px;
}

.tree {
  width: 100%;
  table-layout: fixed;
  border-spacing: 0;
}

.tree th {
  height: 21px;
  padding: 1px 5px 0;
  text-align: left;
  font-weight: normal;
  background: #f0f0f0;
  border-bottom: 1px solid #ccc;
  border-right: 1px solid #ccc;
}

.tree th:last-child {
  border-right: 0;
}

.col-name {
  width: 200px;
}

.col-new {
  width: 100px;
}

.sort {
  display: inline-block;
  margin-left: 14px;
  border: 5px solid transparent;
  border-top: 0;
  border-bottom-color: #111;
  vertical-align: 1px;
}

.tree td {
  height: 20px;
  padding: 0;
}

.node {
  height: 20px;
  display: flex;
  align-items: center;
}

.node span,
.node label {
  margin-left: 3px;
  padding-bottom: 1px;
}

.bold {
  font-weight: bold;
}

.twig {
  width: 19px;
  height: 20px;
  fill: none;
  stroke: #999;
  stroke-dasharray: 1 1;
}

.twig.deep {
  width: 39px;
}

.twig .box {
  fill: #fff;
  stroke: #bbb;
  stroke-dasharray: none;
}

.twig .sign {
  stroke: #111;
  stroke-dasharray: none;
}

.ico {
  width: 16px;
  height: 16px;
  display: block;
}

.tick {
  margin-left: 5px;
}

.check {
  appearance: none;
  width: 13px;
  height: 13px;
  margin: 0 1px;
  border: 1px solid #111;
  background: #fff;
}

.check:checked::after {
  content: "";
  display: block;
  height: 11px;
  background: #1db52c;
  clip-path: polygon(0 50%, 20% 45%, 38% 60%, 85% 5%, 100% 10%, 48% 100%, 28% 100%);
}

.hscroll {
  height: 17px;
  display: flex;
  background: #f0f0f0;
}

.thumb {
  flex: 1;
  margin-right: 12px;
  display: flex;
  align-items: center;
  justify-content: center;
  gap: 2px;
  border: 1px solid #8c8c8c;
  border-radius: 2px;
  background: linear-gradient(#f4f4f4, #e0e0e2 45%, #cdcdd0 50%, #c4c4c8);
}

.thumb i {
  width: 1px;
  height: 7px;
  background: #444;
}

.splitter {
  height: 5px;
  margin-top: 1px;
  background: #dcdcdc;
  border: 1px solid #b4b4b4;
}

.section {
  height: 24px;
  justify-content: space-between;
  padding: 2px 5px 0 7px;
  border-bottom: 2px solid #d2d2d2;
  font-size: 14px;
  color: #2484b8;
}

/* graphics window */
.viewport {
  flex: 1;
  position: relative;
  overflow: hidden;
  background: linear-gradient(#b3b4b6, #c8c9cb 27%, #e6e8ea 80%);
}

.model {
  position: absolute;
  left: 346px;
  top: 278px;
  width: 500px;
  height: 500px;
}

.model canvas,
.model-lines {
  position: absolute;
  left: 0;
  top: 0;
}

.axis {
  font: 13px "Liberation Sans", sans-serif;
  fill: #d8d4cc;
  text-anchor: middle;
}

.triad {
  position: absolute;
  left: 58px;
  bottom: 59px;
  width: 80px;
  height: 80px;
  overflow: visible;
  font: 12px "Liberation Sans", sans-serif;
  text-anchor: middle;
}

.toolbar {
  position: absolute;
  top: 0;
  left: 236px;
  right: 149px;
  display: grid;
  grid-template-columns: 31px 1fr;
  grid-template-rows: 30px 34px;
  padding: 0 6px 9px 0;
  background: #5b8981;
  border-radius: 4px 0 5px 5px;
}

.app-logo {
  width: 24px;
  height: 24px;
  margin: 2px 4px;
}

.tabs {
  display: flex;
  padding-left: 1px;
  gap: 1px;
}

.tab {
  padding: 0 6px;
  color: #fff;
  font-size: 11px;
  white-space: nowrap;
}

.tab.current {
  background: #fff;
  color: #111;
}

.tools {
  display: flex;
  align-items: center;
  gap: 7px;
  padding-left: 5px;
  background: #fff;
}

.tool {
  width: 24px;
  height: 24px;
}

.tool svg {
  width: 24px;
  height: 24px;
  flex: none;
}

.tool.drop {
  width: 36px;
  justify-content: flex-start;
}

.tool.drop::after,
.overflow::after {
  content: "";
  margin-left: 8px;
  border: 3px solid transparent;
  border-top-color: #111;
  border-bottom: 0;
}

.sep {
  width: 1px;
  height: 26px;
  margin: 0 -1px;
  background: #d4d4d4;
}

.overflow {
  margin: 12px 5px 0 auto;
}

.upload {
  position: absolute;
  top: 2px;
  right: 107px;
  height: 25px;
  align-items: stretch;
  border: 1px solid #2888c8;
  border-radius: 3px;
  overflow: hidden;
  background: linear-gradient(100deg, #eef8ff, #bfe4fa 60%, #98d4f6);
  box-shadow: 0 1px 2px #666;
}

.upload-icon {
  width: 28px;
  display: flex;
  align-items: center;
  justify-content: center;
  background: linear-gradient(#40aef4, #148ce0);
}

.upload-text {
  padding: 4px 13px;
  color: #3c6e98;
}

/* bottom bars */
.statusbar {
  height: 22px;
  display: flex;
  align-items: center;
  padding: 0 53px 0 3px;
  border-top: 1px solid #a8a8a8;
  background: #fff;
}

.hint {
  margin-right: auto;
  padding-bottom: 2px;
  font-size: 11px;
  font-weight: bold;
}

.status-screen {
  margin-left: 2px;
  background: #c6d6d2;
}

.taskbar {
  height: 8px;
  display: flex;
  gap: 3px;
  overflow: hidden;
  border-top: 1px solid #1c2c40;
  background: linear-gradient(90deg, #175896, #2277b4 120px, #58aedc 490px, #3296d0 34%, #2277c0 64%, #1e70bc 68%, #a8d4f8 69%, #1e66b0 70%, #1a58a0 82%, #123c70);
  box-shadow: inset 0 1px #a0c4dc;
}

.orb {
  width: 32px;
  height: 32px;
  margin: 2px 75px 0 12px;
  flex: none;
  border-radius: 50%;
  background: #9cb8d0;
}

.task {
  width: 59px;
  border: 1px solid #24506c;
  border-bottom: 0;
  background: #b8dcf0;
  box-shadow: inset 0 1px #fff;
}

.t-folder {
  background: linear-gradient(90deg, #b8dcf0 25%, #d8b870 25% 50%, #b8dcf0 50%);
}

.t-green {
  background: linear-gradient(90deg, #cce8f0 40%, #50b840 55%, #c0e0e8 70%);
}

.t-blue {
  border-color: transparent;
  box-shadow: none;
  background: linear-gradient(90deg, transparent 25%, #60c4ff 25% 75%, transparent 75%);
}

.t-pink {
  background: linear-gradient(90deg, #b8dcf0 25%, #e02848 25% 50%, #b8dcf0 50%);
}

.t-red {
  background: linear-gradient(90deg, #d09ca8 25%, #f00000 25% 75%, #d09ca8 75%);
}

.t-nx {
  background: #dcecf4;
}

.clock {
  margin: 2px 24px 0 auto;
  color: #fff;
}

.show-desktop {
  width: 15px;
  border: 1px solid #90a8c0;
  background: #56789c;
}

/* overlays */
.watermark {
  position: absolute;
  right: 25px;
  bottom: 13px;
  display: flex;
  gap: 8px;
  pointer-events: none;
}

.watermark-text {
  display: flex;
  flex-direction: column;
  align-items: center;
  padding-top: 6px;
  color: rgba(255, 255, 255, .5);
  white-space: nowrap;
}

.watermark-text strong {
  font: bold 41px/50px "Noto Sans CJK SC", sans-serif;
}

.watermark-text span {
  font: bold 15px/16px "DejaVu Sans", sans-serif;
}

.meter {
  position: absolute;
  right: 0;
  bottom: 14px;
  width: 10px;
  height: 59px;
  padding: 6px 2px 6px 4px;
  border-radius: 4px 0 0 4px;
  border: 1px solid #333a48;
  border-right: 0;
  background: #50566a;
}

.meter i {
  display: block;
  height: 100%;
  background:
    repeating-linear-gradient(transparent 0 2px, #50566a 2px 3px),
    linear-gradient(#2c303c 33%, #f0d840 33%, #90e060 65%, #50e8d0);
}
```

FILE: model.js
```js
// Shaded sphere with the lower left quarter cut away
const canvas = document.getElementById('sphere');
const ctx = canvas.getContext('2d');
const size = canvas.width;
const c = size / 2;
const r = 249.5;

const lights = [
  { dir: [0.58, 0.60, 0.55], half: [0.33, 0.33, 0.885], diffuse: 0.65, specular: 0.26, shine: 34 },
  { dir: [-0.53, 0.63, 0.56], half: [-0.305, 0.32, 0.897], diffuse: 0.48, specular: 0.15, shine: 34 }
];

function dot(a, b) {
  return Math.max(0, a[0] * b[0] + a[1] * b[1] + a[2] * b[2]);
}

const img = ctx.createImageData(size, size);
for (let py = 0; py < size; py++) {
  for (let px = 0; px < size; px++) {
    const x = (px + 0.5 - c) / r;
    const y = (c - py - 0.5) / r;
    const d = x * x + y * y;
    if (d > 1) continue;

    let color;
    if (x < 0 && y < 0) {
      color = [255, 163, 4];
    } else {
      const n = [x, y, Math.sqrt(1 - d)];
      let k = 0.4;
      let s = 0;
      for (const l of lights) {
        k += l.diffuse * dot(n, l.dir);
        s += l.specular * Math.pow(dot(n, l.half), l.shine);
      }
      color = [255 * (k + s), 255 * (0.6 * k + s), 255 * s];
    }

    const i = (py * size + px) * 4;
    img.data[i] = color[0];
    img.data[i + 1] = color[1];
    img.data[i + 2] = color[2];
    img.data[i + 3] = 255;
  }
}
ctx.putImageData(img, 0, 0);
```
